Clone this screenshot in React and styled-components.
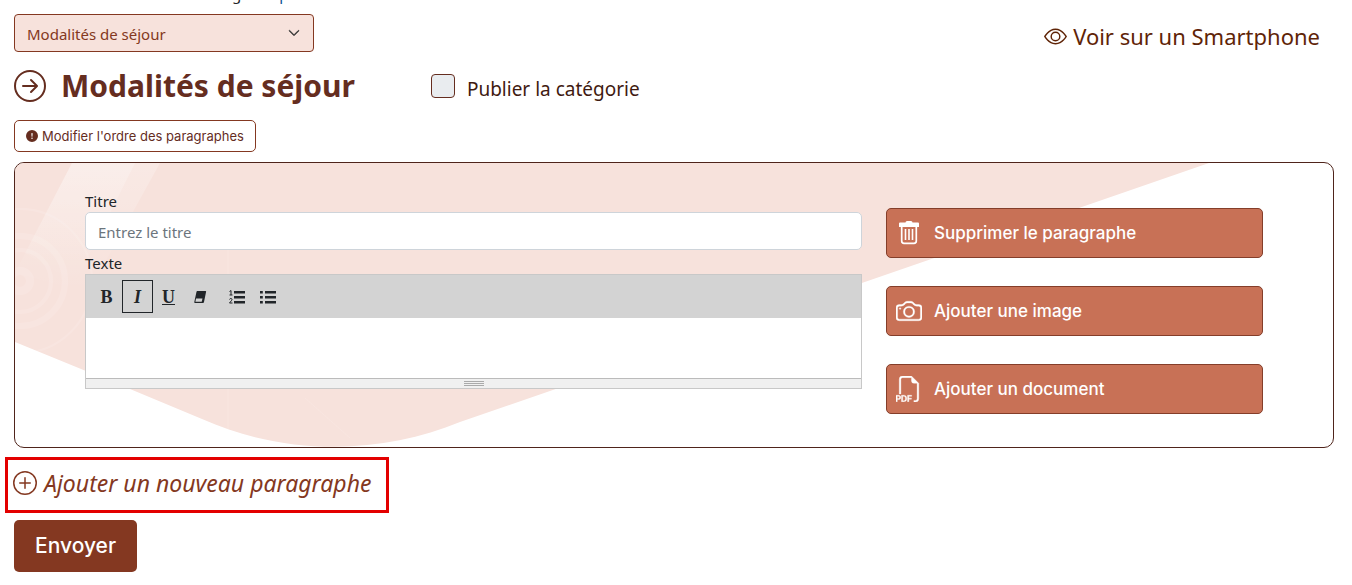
import React from 'react';
import styled, { createGlobalStyle } from "styled-components";
import { BsArrowRightCircle, BsExclamationCircleFill, BsEye, BsPlusCircle, BsFiletypePdf, BsCamera, BsChevronDown } from "react-icons/bs";

const GlobalStyle = createGlobalStyle`
  * {
    box-sizing: border-box;
  }
  body {
    margin: 0;
    background: #fff;
    color: #212529;
    font-family: "Noto Sans", "Open Sans", sans-serif;
    font-size: 15px;
    line-height: 24px;
  }
  button, input, select, textarea {
    font: inherit;
  }
  svg {
    display: block;
    flex: none;
  }
`
const Page = styled.main`
  padding: 0 18px 13px 14px;
`
// end of the intro line, scrolled out of view
const Intro = styled.p`
  display: flex;
  align-items: flex-end;
  gap: 38px;
  height: 6px;
  margin: 0 0 8px;
  padding-left: 218px;
  overflow: hidden;
`
const IntroLink = styled.a`
  color: #0b5394;
  text-decoration: none;
`
const TopBar = styled.div`
  display: flex;
  justify-content: space-between;
  align-items: center;
`
const SelectBox = styled.div`
  position: relative;
  width: 300px;
  color: #303030;

  svg {
    position: absolute;
    right: 14px;
    top: 13px;
    pointer-events: none;
    stroke: currentColor;
    stroke-width: 1;
  }
`
const Select = styled.select`
  appearance: none;
  display: block;
  width: 100%;
  height: 38px;
  padding: 2px 36px 0 12px;
  border: 1px solid #843821;
  border-radius: 4px;
  background: #f7e2dc;
  color: #843821;
`
const PhoneLink = styled.a`
  display: flex;
  align-items: center;
  gap: 6px;
  margin-right: 14px;
  padding-top: 6px;
  color: #5f2407;
  font-size: 22px;
  line-height: 30px;
  text-decoration: none;
`
const TitleRow = styled.div`
  display: flex;
  align-items: center;
  height: 68px;
  color: #652d1f;
`
const Title = styled.h1`
  margin: 0 76px 0 15px;
  font-size: 30px;
  line-height: 36px;
  font-weight: 700;
`
const Checkbox = styled.input`
  appearance: none;
  width: 24px;
  height: 24px;
  margin: 0 12px 0 0;
  border: 1px solid #652d1f;
  border-radius: 4px;
  background: #e9ecef;
`
const CheckLabel = styled.label`
  padding-top: 5px;
  color: #3f1a11;
  font-size: 19px;
  line-height: 28px;
`
const OrderButton = styled.button`
  display: flex;
  align-items: center;
  gap: 4px;
  height: 32px;
  padding: 0 11px;
  border: 1px solid #843821;
  border-radius: 5px;
  background: #fff;
  color: #652d1f;
  font-family: Inter, sans-serif;
  font-size: 13px;
  font-weight: 400;
`
const Card = styled.section`
  position: relative;
  display: grid;
  grid-template-columns: 777fr 377fr;
  gap: 24px;
  margin: 10px 0 9px;
  padding: 27px 70px 33px;
  border: 1px solid #4f241b;
  border-radius: 10px;
  overflow: hidden;
`
const Backdrop = styled.svg`
  position: absolute;
  top: 0;
  left: 0;
  width: 100%;
  height: 100%;
`
const Fields = styled.div`
  position: relative;
`
const Label = styled.label`
  display: block;
  line-height: 22px;
`
const TextInput = styled.input`
  display: block;
  width: 100%;
  height: 38px;
  margin-bottom: 2px;
  padding: 2px 12px 0;
  border: 1px solid #ced4da;
  border-radius: 5px;
  background: #fff;

  &::placeholder {
    color: #6c757d;
  }
`
const Editor = styled.div`
  border: 1px solid #c8c8c8;
  background: #fff;
`
const Toolbar = styled.div`
  display: flex;
  align-items: center;
  height: 43px;
  padding-left: 5px;
  background: #d3d3d3;
`
const Tool = styled.button`
  display: flex;
  align-items: center;
  justify-content: center;
  width: 31px;
  height: 33px;
  margin-left: ${props => props.$group ? "6px" : "0"};
  padding: 0;
  border: 1px solid ${props => props.$active ? "#212529" : "transparent"};
  background: none;
  color: #212529;
`
const Letter = styled.span`
  font-family: "Liberation Serif", serif;
  font-size: 18px;
  line-height: 20px;
  font-weight: 700;
  font-style: ${props => props.$italic ? "italic" : "normal"};
  text-decoration: ${props => props.$underline ? "underline" : "none"};
`
const TextArea = styled.textarea`
  display: block;
  width: 100%;
  height: 60px;
  padding: 10px;
  border: 0;
  resize: none;
`
const ResizeBar = styled.div`
  display: flex;
  justify-content: center;
  align-items: center;
  height: 10px;
  border-top: 1px solid #bbb;
  background: #f0f0f0;
`
const Actions = styled.div`
  position: relative;
  display: flex;
  flex-direction: column;
  gap: 28px;
  padding-top: 18px;
`
const ActionButton = styled.button`
  display: flex;
  align-items: center;
  gap: 12px;
  height: 50px;
  padding: 0 9px;
  border: 1px solid #843e2a;
  border-radius: 5px;
  background: #c87156;
  color: #fff;
  font-family: Inter, sans-serif;
  font-size: 17px;
  font-weight: 500;
`
const AddButton = styled.button`
  display: flex;
  align-items: center;
  gap: 7px;
  height: 56px;
  margin: 0 0 7px -9px;
  padding: 0 15px 4px 5px;
  border: 3px solid #e30000;
  background: #fff;
  color: #843821;
  font-size: 23px;
  font-style: italic;
`
const SendButton = styled.button`
  display: block;
  height: 52px;
  padding: 0 21px;
  border: 0;
  border-radius: 5px;
  background: #843821;
  color: #fff;
  font-family: Inter, sans-serif;
  font-size: 21px;
  font-weight: 500;
`

function TrashIcon() {
  return (
    <svg width="26" height="26" viewBox="0 0 26 26" fill="none" stroke="currentColor">
      <path d="M3 3.500Q3 2.500 4 2.500H9.500Q9.500 1 11 1h4q1.500 0 1.500 1.500H22q1 0 1 1V7H3z" fill="currentColor" stroke="none" />
      <path d="M5.700 7v14q0 2.300 2.300 2.300h10q2.300 0 2.300-2.300V7" strokeWidth="1.700" />
      <path d="M9.500 9v11M13 9v11M16.500 9v11" strokeWidth="1.600" />
    </svg>
  );
}

function EraserIcon() {
  return (
    <svg width="14" height="14" viewBox="0 0 14 14">
      <path d="M4.300 1h8.200q.8 0 .6.800L11 12q-.2 1-1 1H2q-.9 0-.7-1L3.500 1.800Q3.700 1 4.300 1z" fill="currentColor" />
      <path d="M3 8.500h6.500l-.8 3.200H2.400z" fill="#d3d3d3" />
    </svg>
  );
}

function ListIcon({ ordered }) {
  return (
    <svg width="16" height="14" viewBox="0 0 16 14" fill="currentColor">
      <path d="M5 1h11v2.500H5zM5 6h11v2.500H5zM5 11h11v2.500H5z" />
      {ordered ? (
        <path d="M.5 1.500L2 .5v4.500M.5 5h3M.5 9.500q.3-1 1.300-1 1.200 0 1.200 1 0 .7-2.500 3.500h3" fill="none" stroke="currentColor" strokeWidth="1" />
      ) : (
        <path d="M0 1h2.800v2.500H0zM0 6h2.800v2.500H0zM0 11h2.800v2.500H0z" />
      )}
    </svg>
  );
}

function CardBackdrop() {
  return (
    <Backdrop viewBox="0 0 1318 284" preserveAspectRatio="none" fill="none" aria-hidden="true">
      <defs>
        <linearGradient id="beam" x1="0" y1="0" x2="0" y2="1">
          <stop offset="0" stopColor="#fff" stopOpacity=".24" />
          <stop offset="1" stopColor="#fff" stopOpacity="0" />
        </linearGradient>
      </defs>
      <path d="M0 0H1194L445 259C370 290 275 295 187 256L115 226 0 179z" fill="#f7e2dc" />
      <path d="M57 0H145L73 130 0 110z" fill="url(#beam)" />
      <path d="M57 0H120L60 120 10 90z" fill="url(#beam)" />
      <g stroke="#fff" opacity=".12">
        <circle cx="5" cy="118" r="10" strokeWidth="8" />
        <circle cx="5" cy="118" r="31" strokeWidth="4" />
        <circle cx="5" cy="118" r="45" strokeWidth="6" />
        <circle cx="5" cy="118" r="72" strokeWidth="2" />
        <path d="M213 60v210M290 235l45 40" />
      </g>
    </Backdrop>
  );
}

function App() {
  return (
    <Page>
      <GlobalStyle />
      <Intro>
        <span>g</span>
        <IntroLink href="#intro">p</IntroLink>
      </Intro>
      <TopBar>
        <SelectBox>
          <Select aria-label="Catégorie">
            <option>Modalités de séjour</option>
          </Select>
          <BsChevronDown size={12} />
        </SelectBox>
        <PhoneLink href="#smartphone">
          <BsEye size={23} />
          Voir sur un Smartphone
        </PhoneLink>
      </TopBar>
      <TitleRow>
        <BsArrowRightCircle size={32} />
        <Title>Modalités de séjour</Title>
        <Checkbox type="checkbox" id="publish" />
        <CheckLabel htmlFor="publish">Publier la catégorie</CheckLabel>
      </TitleRow>
      <OrderButton type="button">
        <BsExclamationCircleFill size={12} />
        Modifier l'ordre des paragraphes
      </OrderButton>

      <Card>
        <CardBackdrop />
        <Fields>
          <Label htmlFor="titre">Titre</Label>
          <TextInput id="titre" placeholder="Entrez le titre" />
          <Label htmlFor="texte">Texte</Label>
          <Editor>
            <Toolbar>
              <Tool type="button" aria-label="Gras"><Letter>B</Letter></Tool>
              <Tool type="button" aria-label="Italique" $active><Letter $italic>I</Letter></Tool>
              <Tool type="button" aria-label="Souligné"><Letter $underline>U</Letter></Tool>
              <Tool type="button" aria-label="Effacer"><EraserIcon /></Tool>
              <Tool type="button" aria-label="Liste numérotée" $group><ListIcon ordered /></Tool>
              <Tool type="button" aria-label="Liste à puces"><ListIcon /></Tool>
            </Toolbar>
            <TextArea id="texte" />
            <ResizeBar>
              <svg width="20" height="5" viewBox="0 0 20 5" stroke="#aaa">
                <path d="M0 .5h20M0 2.500h20M0 4.500h20" />
              </svg>
            </ResizeBar>
          </Editor>
        </Fields>
        <Actions>
          <ActionButton type="button"><TrashIcon />Supprimer le paragraphe</ActionButton>
          <ActionButton type="button"><BsCamera size={26} strokeWidth={0.2} stroke="currentColor" />Ajouter une image</ActionButton>
          <ActionButton type="button"><BsFiletypePdf size={26} strokeWidth={0.2} stroke="currentColor" />Ajouter un document</ActionButton>
        </Actions>
      </Card>

      <AddButton type="button">
        <BsPlusCircle size={24} />
        Ajouter un nouveau paragraphe
      </AddButton>
      <SendButton type="submit">Envoyer</SendButton>
    </Page>
  );
}

export default App;
